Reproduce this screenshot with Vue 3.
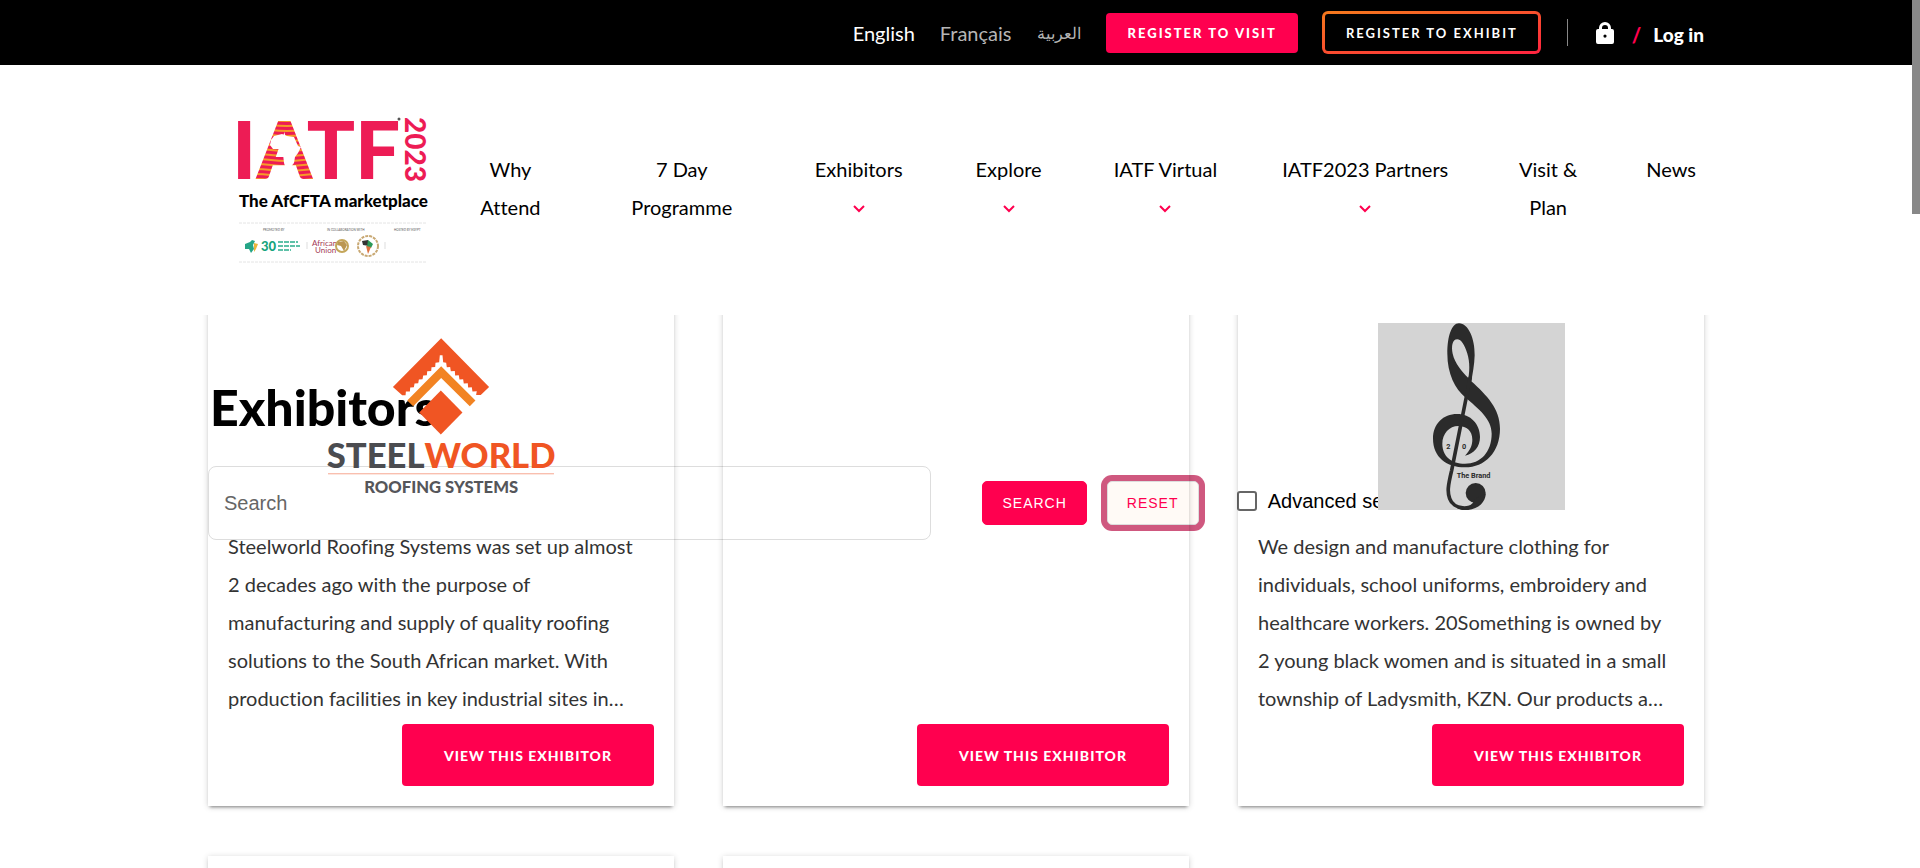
<script setup>
import { ref } from 'vue'

const languages = [
  { label: 'English', code: 'en', active: true },
  { label: 'Français', code: 'fr', active: false },
  { label: 'العربية', code: 'ar', active: false },
]

const navItems = [
  { lines: ['Why', 'Attend'], menu: false },
  { lines: ['7 Day', 'Programme'], menu: false },
  { lines: ['Exhibitors'], menu: true },
  { lines: ['Explore'], menu: true },
  { lines: ['IATF Virtual'], menu: true },
  { lines: ['IATF2023 Partners'], menu: true },
  { lines: ['Visit &', 'Plan'], menu: false },
  { lines: ['News'], menu: false },
]

const steelText = `Steelworld Roofing Systems was set up almost
2 decades ago with the purpose of
manufacturing and supply of quality roofing
solutions to the South African market. With
production facilities in key industrial sites in…`

const brandText = `We design and manufacture clothing for
individuals, school uniforms, embroidery and
healthcare workers. 20Something is owned by
2 young black women and is situated in a small
township of Ladysmith, KZN. Our products a…`

const exhibitors = [
  { id: 1, logo: 'steel', text: steelText, ready: true },
  { id: 2, logo: '', text: '', ready: true },
  { id: 3, logo: 'brand', text: brandText, ready: true },
  { id: 4, logo: '', text: '', ready: false },
  { id: 5, logo: '', text: '', ready: false },
]

const query = ref('')
const advanced = ref(false)
</script>

<template>
  <div class="page">
    <header>
      <div class="topbar">
        <div class="wrap topbar-row">
          <nav class="languages" aria-label="Language">
            <a v-for="l in languages" :key="l.code" href="#" :lang="l.code" :class="{ active: l.active }">{{ l.label }}</a>
          </nav>
          <button class="register visit" type="button">REGISTER TO VISIT</button>
          <button class="register exhibit" type="button">REGISTER TO EXHIBIT</button>
          <span class="divider"></span>
          <svg class="lock" viewBox="0 0 18 22" aria-hidden="true">
            <path fill="#fff" fill-rule="evenodd" d="M3 7V6a6 6 0 0 1 12 0v1h1a2 2 0 0 1 2 2v11a2 2 0 0 1-2 2H2a2 2 0 0 1-2-2V9a2 2 0 0 1 2-2ZM6 7h6V6a3 3 0 0 0-6 0ZM9 12.500a1.600 1.600 0 1 0 0 3.200a1.600 1.600 0 1 0 0-3.200Z" />
          </svg>
          <span class="slash">/</span>
          <a class="login" href="#">Log in</a>
        </div>
      </div>

      <div class="wrap mainbar">
        <a class="logo" href="#" aria-label="IATF 2023">
          <svg viewBox="0 0 188 148">
            <defs>
              <pattern id="stripes" width="64" height="5" patternUnits="userSpaceOnUse">
                <rect width="64" height="5" fill="#ed1c55" />
                <path d="M0 3Q16 1 32 3T64 3" fill="none" stroke="#f79a28" stroke-width="2" />
              </pattern>
            </defs>
            <text class="mark" x="-7" y="62">I<tspan fill="url(#stripes)">A</tspan>TF</text>
            <path fill="#fff" d="M35 19l8-2 5 2 7 1 4 9 3 1-3 6-3 4-1 6-5 6-3 0-2-6-1-9-3-5-7 0-3-4 1-5Z" />
            <text class="year" transform="translate(166 0) rotate(90)" x="0" y="0">2023</text>
            <circle cx="160" cy="2" r="1.500" fill="#555" />
            <text class="tagline" x="0" y="90">The AfCFTA marketplace</text>
            <path d="M0 106h188M0 145h188" stroke="#e4e4e4" stroke-dasharray="3 1" />
            <g class="tiny">
              <text x="24" y="114">PROMOTED BY</text>
              <text x="88" y="114">IN COLLABORATION WITH</text>
              <text x="155" y="114">HOSTED BY EGYPT</text>
            </g>
            <path fill="#25a587" d="M6 127l5-2 2-2 3 1-2 4 1 4-3 4-2-4-4 0Z" />
            <path fill="#e9b53b" d="M15 126l4 1-2 5-2 3Z" />
            <text class="thirty" x="22" y="134">30</text>
            <path d="M39 125h20M39 129h22M39 133h13" stroke="#5fc1a8" stroke-width="2" stroke-dasharray="5 1" />
            <path d="M68 125v7M146 125v7" stroke="#ddd" />
            <text class="union" x="73" y="129">African</text>
            <text class="union" x="76" y="136">Union</text>
            <circle cx="103" cy="129" r="6" fill="none" stroke="#c4a65a" stroke-width="2" />
            <path fill="#bb9752" d="M99 125l6-1 3 4-3 6-3-5-4-1Z" />
            <circle cx="129" cy="129" r="10" fill="none" stroke="#c8a873" stroke-width="2" stroke-dasharray="3 1" />
            <path fill="#343434" d="M123 124l6-1 1 6-6-1Z" />
            <path fill="#2b9957" d="M129 123l5 4-2 4-4-1Z" />
            <path fill="#dc713e" d="M127 129l5 1-3 7Z" />
          </svg>
        </a>
        <nav class="menu" aria-label="Main">
          <a v-for="item in navItems" :key="item.lines[0]" href="#">
            <span v-for="line in item.lines" :key="line">{{ line }}</span>
            <svg v-if="item.menu" class="chevron" viewBox="0 0 12 8" aria-hidden="true">
              <path d="M1 1l5 5 5-5" fill="none" stroke="#ff004f" stroke-width="2" />
            </svg>
          </a>
        </nav>
      </div>
    </header>

    <main>
      <section class="wrap search">
        <h1>Exhibitors</h1>
        <form @submit.prevent>
          <input v-model="query" class="query" type="text" placeholder="Search" aria-label="Search" />
          <div class="actions">
            <button class="submit" type="submit">SEARCH</button>
            <button class="reset" type="button" @click="query = ''">RESET</button>
          </div>
          <label class="advanced">
            <input v-model="advanced" type="checkbox" />
            <span>Advanced search</span>
          </label>
        </form>
      </section>

      <section class="wrap cards">
        <article v-for="e in exhibitors" :key="e.id" class="card">
          <div class="media">
            <svg v-if="e.logo === 'steel'" class="steel" viewBox="385 112 679 470" role="img" aria-label="Steelworld">
              <path fill="#f05523" d="M725 113L869 259 844 283 830 283 832 272 819 273 817 260 806 261 805 248 793 249 791 236 780 237 778 224 767 225 766 211 754 212 752 199 742 200 740 186 731 185 729 164H721L719 185 708 186 707 199 696 200 695 211 683 212 682 224 671 225 669 236 658 237 656 248 645 249 643 260 632 261 631 273 619 273 618 284 608 284 580 259Z" />
              <path fill="#f28322" d="M725 197L828 300 811 317 725 232 641 317 623 300Z" />
              <path fill="#f05523" d="M724 270L789 336 724 402 659 336Z" />
              <text class="steel-name" x="725" y="504" text-anchor="middle"><tspan fill="#4b4c50">STEEL</tspan><tspan fill="#f05523">WORLD</tspan></text>
              <path d="M385 520H1064" stroke="#f7a68f" stroke-width="3" />
              <text class="steel-sub" x="725" y="578" text-anchor="middle">ROOFING SYSTEMS</text>
            </svg>
            <svg v-else-if="e.logo === 'brand'" class="brand" viewBox="54 38 561 561" role="img" aria-label="20 The Brand">
              <rect x="54" y="38" width="561" height="561" fill="#d4d4d4" />
              <path fill="#2b2b2b" fill-rule="evenodd" d="M297 39C325 39 345 85 344 135 343 165 338 190 334 213 380 255 420 295 420 355 420 425 375 471 315 471 260 471 219 440 219 385 219 340 250 311 291 311 332 311 360 341 360 380 360 410 342 430 315 436 330 420 337 405 337 388 337 362 320 347 295 347 268 347 247 370 247 400 247 438 275 460 315 460 362 460 395 425 395 370 395 325 355 295 317 262 285 235 262 190 262 130 262 78 275 39 297 39ZM292 87C276 87 274 110 278 130 285 160 305 182 325 203 330 175 329 145 318 118 310 99 302 87 292 87Z" />
              <path d="M331 200L275 480C263 530 262 545 269 565 280 597 335 605 349 570" fill="none" stroke="#2b2b2b" stroke-width="11" />
              <circle cx="347" cy="548" r="30" fill="#2b2b2b" />
              <path fill="#2b2b2b" d="M377 550C377 578 350 600 310 600L290 594C325 596 345 585 345 565Z" />
              <text class="brand-text" x="259" y="415">2</text>
              <text class="brand-text" x="306" y="415">0</text>
              <text class="brand-text" x="290" y="504">The Brand</text>
            </svg>
          </div>
          <p>{{ e.text }}</p>
          <button v-if="e.ready" class="view" type="button">VIEW THIS EXHIBITOR</button>
        </article>
      </section>
    </main>
    <div class="scroll-thumb" aria-hidden="true"></div>
  </div>
</template>

<style>
body { background: #fff; }
</style>

<style scoped>
* { box-sizing: border-box; }

.page {
  display: flex;
  flex-direction: column;
  height: 100vh;
  padding-right: 8px;
  overflow: hidden;
  font-family: Lato, "Noto Sans", sans-serif;
  font-size: 20px;
  font-variant-ligatures: none;
  color: #000;
}
.wrap { width: 78.25%; max-width: 1496px; margin: 0 auto; }
a { color: inherit; text-decoration: none; }
button { font-family: inherit; cursor: pointer; }

.topbar { background: #000; color: #fff; }
.topbar-row { display: flex; align-items: center; justify-content: flex-end; height: 65px; }
.languages { display: flex; align-items: center; gap: 25px; margin-right: 25px; color: #b5b5b5; }
.languages .active { color: #fff; }
.languages a:lang(ar) { font-size: 16px; }
.register { color: #fff; font-size: 13px; letter-spacing: 2px; border-radius: 4px; white-space: nowrap; }
.visit { height: 40px; padding: 0 21px 0 22px; border: 0; background: #ff004f; font-weight: 900; }
.exhibit {
  height: 43px;
  margin-left: 24px;
  padding: 0 20px 0 21px;
  border: 3px solid transparent;
  border-radius: 6px;
  background: linear-gradient(#000, #000) padding-box, linear-gradient(170deg, #f47a1c, #ff2340) border-box;
  font-weight: 700;
}
.divider { width: 1px; height: 27px; margin: 0 28px 0 26px; background: #888; }
.lock { width: 18px; height: 22px; }
.slash { margin: 4px 12px 0 18px; color: #ff004f; font-weight: 900; }
.login { margin-top: 4px; font-size: 19px; font-weight: 900; }

.mainbar { display: flex; align-items: flex-start; height: 250px; padding-left: 31px; }
.logo { flex: none; width: 188px; margin-top: 52px; }
.logo svg { display: block; width: 100%; overflow: visible; }
.mark { font: 900 80px Lato, sans-serif; fill: #ed1c55; }
.year { font: 900 28px Lato, sans-serif; fill: #ed1c55; }
.tagline { font: 900 17px Lato, sans-serif; }
.tiny { font: 3px Lato, sans-serif; fill: #555; }
.thirty { font: 900 13px Lato, sans-serif; fill: #18a47d; }
.union { font: 8px Lato, sans-serif; fill: #a43a55; }

.menu {
  display: grid;
  flex: 1;
  grid-template-columns: 139fr 204fr 150fr 150fr 164fr 236fr 130fr 91fr;
  margin: 85px 0 0 14px;
  line-height: 38px;
  text-align: center;
}
.menu a { display: flex; flex-direction: column; align-items: center; white-space: nowrap; }
.menu a:last-child { align-items: flex-end; padding-right: 8px; }
.chevron { width: 12px; height: 8px; margin-top: 17px; }

main { display: grid; flex: 1; min-height: 0; overflow: hidden; align-items: start; }
.search, .cards { grid-area: 1 / 1; }

h1 { margin: 62px 0 0; padding-left: 2px; font-size: 50px; line-height: 60px; font-weight: 900; }
form { display: grid; grid-template-columns: 723fr 305fr 467fr; align-items: center; margin-top: 29px; }
.query {
  width: 100%;
  height: 74px;
  padding: 0 15px;
  border: 1px solid #ddd;
  border-radius: 8px;
  background: transparent;
  font: 20px "Liberation Sans", Arial, sans-serif;
}
.query::placeholder { color: #666; opacity: 1; }
.actions { display: flex; gap: 20px; padding-left: 51px; }
.submit, .reset {
  height: 44px;
  padding: 0 19px;
  border: 1px solid #ff004f;
  border-radius: 5px;
  font: 14px "Liberation Sans", Arial, sans-serif;
  letter-spacing: 1px;
}
.submit { background: #ff004f; color: #fff; }
.reset { border-color: #ddd; background: #fffaf6; color: #ff004f; box-shadow: 0 0 0 6px #cf587f; }
.advanced { display: flex; align-items: center; gap: 11px; padding-bottom: 4px; font: 20px "Liberation Sans", Arial, sans-serif; }
.advanced input { appearance: none; width: 20px; height: 20px; margin: 0; border: 2px solid #666; border-radius: 3px; }

.cards { display: grid; grid-template-columns: repeat(3, minmax(0, 1fr)); gap: 50px 49px; margin-top: -13px; }
.card {
  display: flex;
  flex-direction: column;
  min-height: 504px;
  padding: 20px;
  box-shadow: 0 3px 3px -2px rgba(0, 0, 0, .4), 0 1px 6px rgba(0, 0, 0, .18);
}
.media { display: flex; align-items: center; justify-content: center; height: 188px; }
.steel { width: 226px; overflow: visible; }
.brand { width: 187px; }
.steel-name { font: 900 104px Lato, sans-serif; }
.steel-sub { font: 900 50px Lato, sans-serif; fill: #55565a; }
.brand-text { font: 700 22px Roboto, sans-serif; fill: #2b2b2b; }
.card p { margin: 17px 0 0; line-height: 38px; color: #333; white-space: pre; }
.view {
  align-self: flex-end;
  height: 62px;
  margin-top: auto;
  padding: 0 42px;
  border: 0;
  border-radius: 4px;
  background: #ff004f;
  color: #fff;
  font-size: 14px;
  font-weight: 900;
  letter-spacing: 1px;
}

.scroll-thumb { position: fixed; top: 0; right: 0; width: 8px; height: 214px; background: #888; }
</style>
